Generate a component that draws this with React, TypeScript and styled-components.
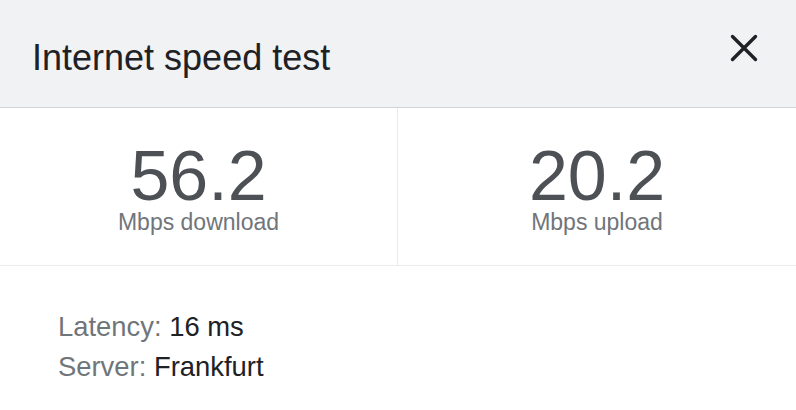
import styled, { createGlobalStyle } from "styled-components";

const GlobalStyle = createGlobalStyle`
  body {
    margin: 0;
    background: #ffffff;
    font-family: "Liberation Sans", Arial, sans-serif;
  }
`;

const Card = styled.div`
  width: 796px;
  height: 410px;
  background: #ffffff;
  overflow: hidden;
`;

const Header = styled.header`
  display: flex;
  align-items: flex-start;
  justify-content: space-between;
  height: 107px;
  padding: 0 28px 0 32px;
  background: #f1f2f4;
  border-bottom: 1px solid #d2d3d5;
`;

const Title = styled.h1`
  margin: 38px 0 0;
  font-size: 36px;
  line-height: 40px;
  font-weight: 400;
  color: #202124;
`;

const CloseButton = styled.button`
  margin-top: 24px;
  width: 48px;
  height: 48px;
  padding: 0;
  border: none;
  background: transparent;
  cursor: pointer;
`;

const Stats = styled.section`
  display: grid;
  grid-template-columns: 398px 1fr;
  border-bottom: 1px solid #ebebeb;
`;

// First column carries the divider between download and upload.
const Stat = styled.div<{ $divider?: boolean }>`
  display: flex;
  flex-direction: column;
  align-items: center;
  padding: 33px 0 31px;
  border-right: ${(p) => (p.$divider ? "1px solid #ebebeb" : "none")};
`;

const Value = styled.span`
  font-size: 70px;
  line-height: 70px;
  color: #4d5156;
`;

const Unit = styled.span`
  font-size: 23px;
  line-height: 23px;
  color: #70757a;
`;

const Info = styled.div`
  padding: 41px 0 0 58px;
`;

const InfoRow = styled.div`
  font-size: 27.4px;
  line-height: 40px;
  color: #202124;
`;

const InfoLabel = styled.span`
  color: #70757a;
`;

const CloseIcon = () => (
  <svg width="48" height="48" viewBox="0 0 48 48">
    <path
      d="M12.5 12.5 L35.5 35.5 M35.5 12.5 L12.5 35.5"
      stroke="#202124"
      strokeWidth="3.4"
      strokeLinecap="round"
      fill="none"
    />
  </svg>
);

const App = () => (
  <>
    <GlobalStyle />
    <Card>
      <Header>
        <Title>Internet speed test</Title>
        <CloseButton aria-label="Close">
          <CloseIcon />
        </CloseButton>
      </Header>
      <Stats>
        <Stat $divider>
          <Value>56.2</Value>
          <Unit>Mbps download</Unit>
        </Stat>
        <Stat>
          <Value>20.2</Value>
          <Unit>Mbps upload</Unit>
        </Stat>
      </Stats>
      <Info>
        <InfoRow>
          <InfoLabel>Latency:</InfoLabel> 16 ms
        </InfoRow>
        <InfoRow>
          <InfoLabel>Server:</InfoLabel> Frankfurt
        </InfoRow>
      </Info>
    </Card>
  </>
);

export default App;
